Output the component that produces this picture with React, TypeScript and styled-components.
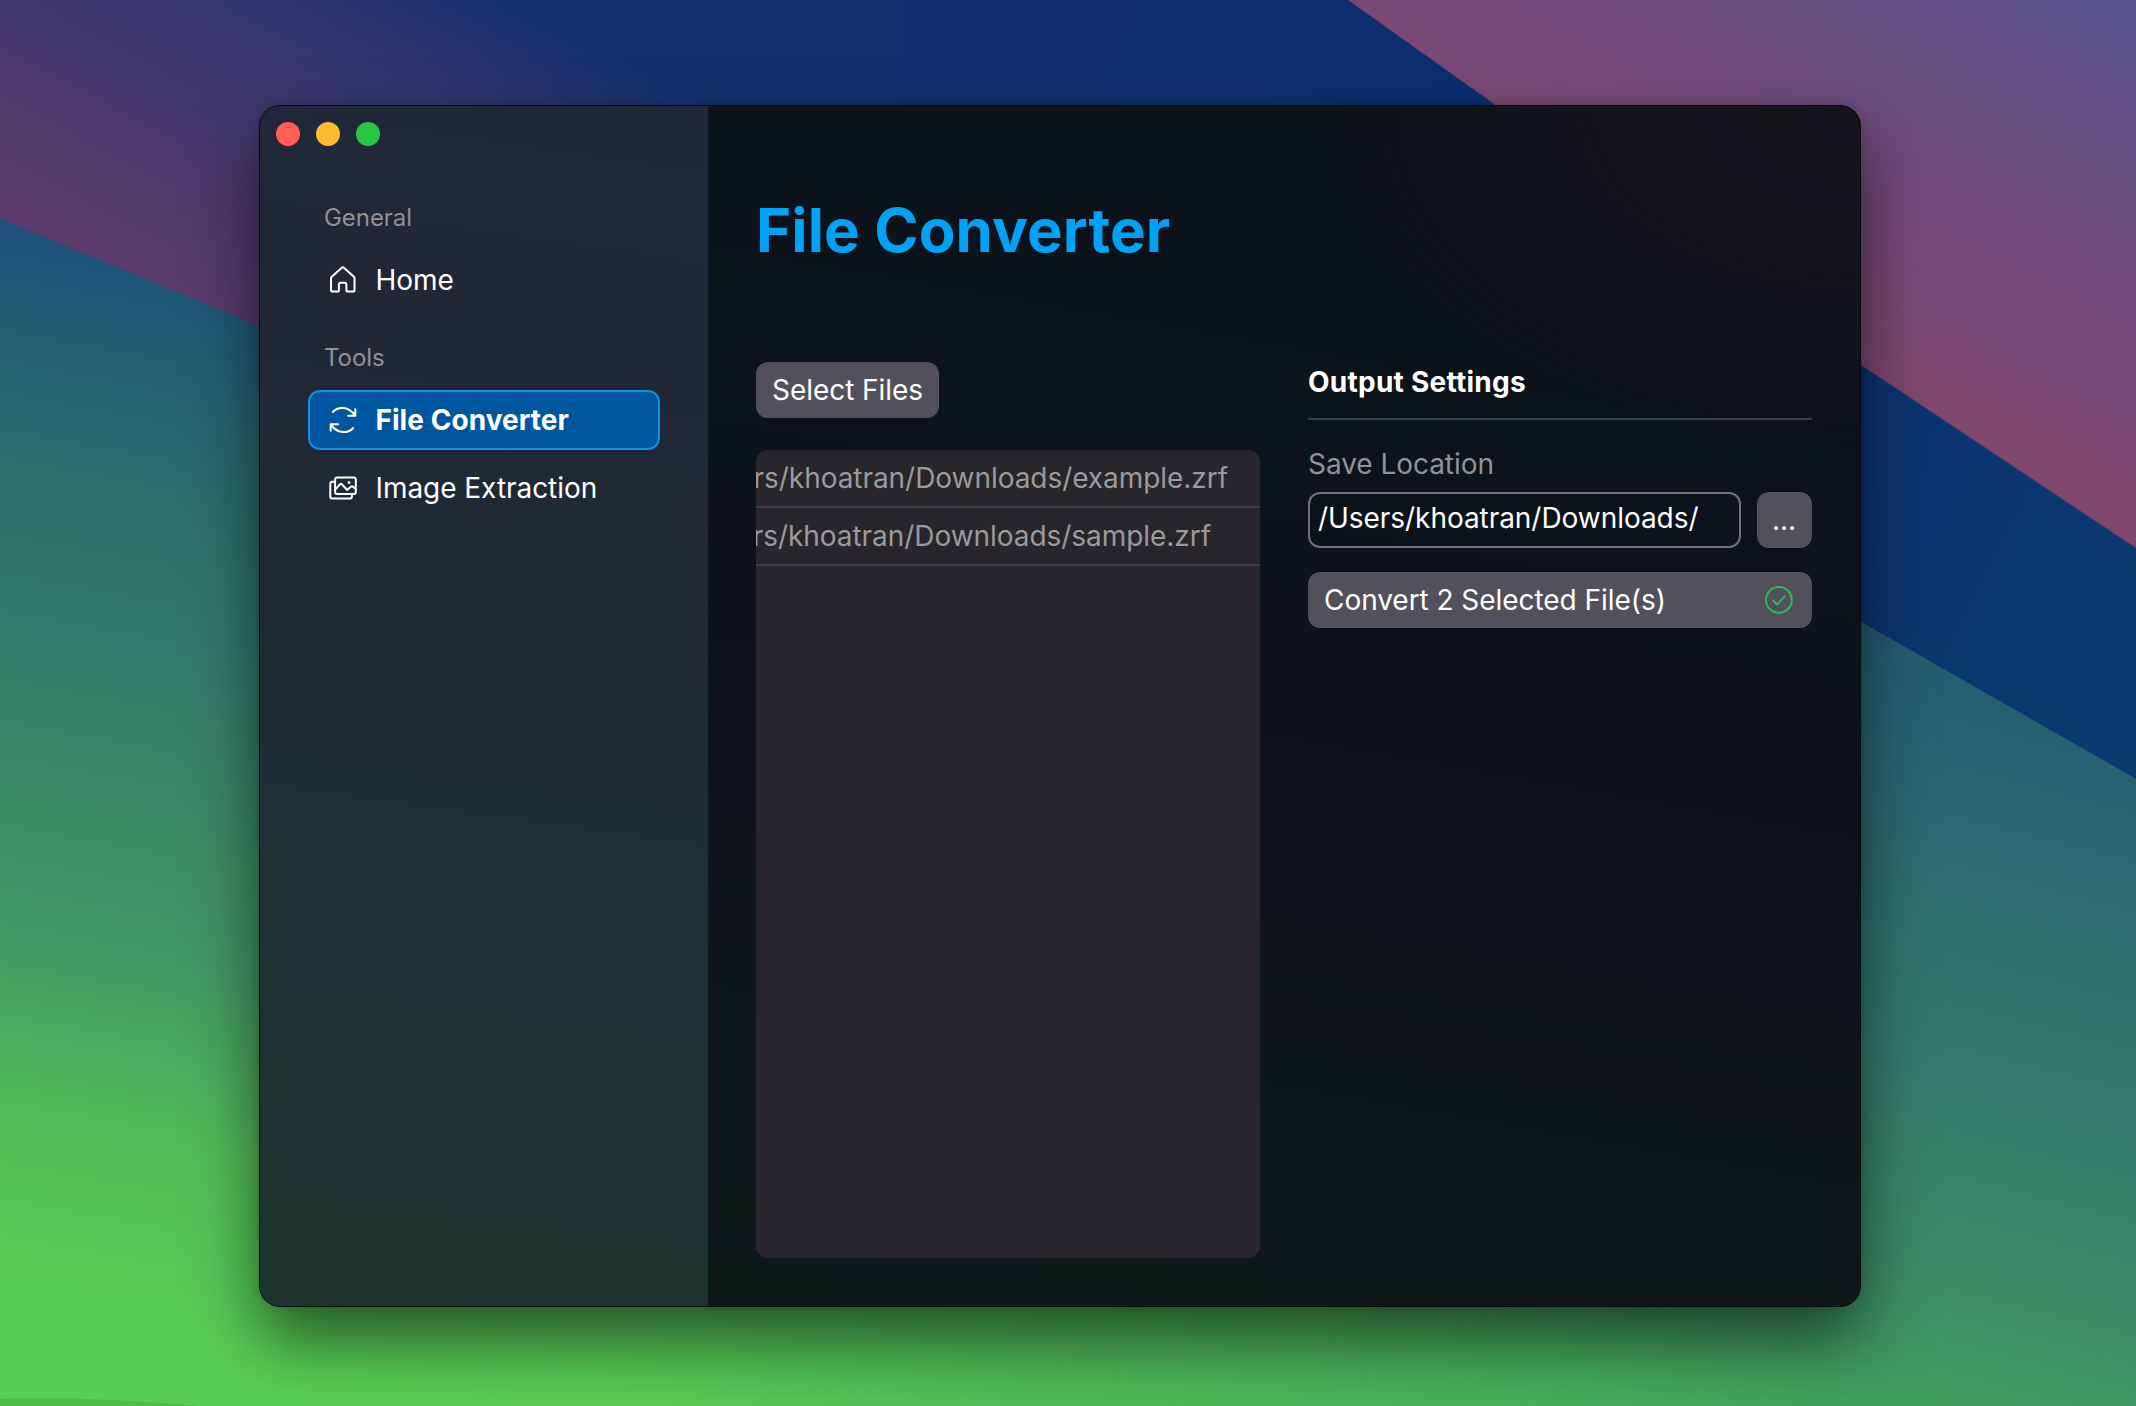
import React from "react";
import styled, { createGlobalStyle } from "styled-components";

const Global = createGlobalStyle`
  *, *::before, *::after { box-sizing: border-box; }
  body { margin: 0; background: #2f7a6a; }
  button, input { font: inherit; color: inherit; border: 0; margin: 0; letter-spacing: inherit; }
`;

const Desktop = styled.main`
  position: relative;
  width: 2136px;
  height: 1406px;
  overflow: hidden;
  padding: 105px 0 0 259px;
  font-family: Inter, "Noto Sans", sans-serif;
  font-size: 28px;
  font-weight: 400;
  line-height: 40px;
  letter-spacing: -0.05px;
  color: #fff;
`;

const Wallpaper = styled.svg`
  position: absolute;
  inset: 0;
  width: 100%;
  height: 100%;
`;

const AppWindow = styled.div`
  position: relative;
  display: flex;
  width: 1602px;
  height: 1202px;
  border: 1px solid rgba(4, 10, 16, 0.85);
  border-radius: 21px;
  overflow: hidden;
  background:
    radial-gradient(520px 330px at 100% 0%, #16141b 0%, rgba(22, 20, 27, 0.9) 40%, rgba(22, 20, 27, 0) 100%),
    linear-gradient(190deg, #0c121a 0%, #0c131b 30%, #0e121a 52%, #0f1618 70%, #0f1717 88%, #0d1a18 100%);
  box-shadow: 0 34px 68px rgba(0, 0, 0, 0.56), 0 0 10px rgba(0, 0, 0, 0.12);
`;

const Sidebar = styled.aside`
  width: 448px;
  flex: none;
  display: flex;
  flex-direction: column;
  background: linear-gradient(188deg, #1f2838 0%, #222738 14%, #222738 24%, #1e2a34 42%, #1d2f34 66%, #1e332f 84%, #1e352f 100%);
`;

const TrafficLights = styled.div`
  display: flex;
  gap: 16px;
  padding: 16px;
`;

const Light = styled.span<{ $color: string }>`
  width: 24px;
  height: 24px;
  border-radius: 50%;
  background: ${(p) => p.$color};
`;

const Nav = styled.nav`
  display: flex;
  flex-direction: column;
  gap: 8px;
  padding: 24px 48px 0;
`;

const NavGroup = styled.div`
  display: flex;
  flex-direction: column;
`;

const NavHeading = styled.h2`
  margin: 0;
  height: 64px;
  padding: 16px 16px 0;
  font-size: 24px;
  font-weight: inherit;
  line-height: 32px;
  color: #919298;
`;

const NavItem = styled.a<{ $active?: boolean }>`
  display: flex;
  align-items: center;
  gap: 17.5px;
  height: 60px;
  margin-bottom: 8px;
  padding: 0 16px 0 18px;
  border: 2px solid ${(p) => (p.$active ? "#0f95e3" : "transparent")};
  border-radius: 12px;
  background: ${(p) => (p.$active ? "#0057a0" : "transparent")};
  font-weight: ${(p) => (p.$active ? 700 : "inherit")};
  letter-spacing: ${(p) => (p.$active ? "0.05px" : "inherit")};
`;

const Icon = styled.svg`
  width: 30px;
  height: 30px;
  flex: none;
  fill: none;
  stroke: currentColor;
  stroke-width: 2;
  stroke-linecap: round;
  stroke-linejoin: round;
`;

const Content = styled.section`
  flex: 1;
  display: flex;
  flex-direction: column;
  padding: 84px 48px 48px;
`;

const Title = styled.h1`
  margin: 0 0 92px;
  font-size: 60px;
  line-height: 80px;
  font-weight: 700;
  letter-spacing: 0.1px;
  color: #00a2f5;
`;

const Columns = styled.div`
  flex: 1;
  display: grid;
  grid-template-columns: 504px 504px;
  gap: 48px;
`;

const Column = styled.div`
  display: flex;
  flex-direction: column;
  align-items: flex-start;
`;

const Button = styled.button`
  display: flex;
  align-items: center;
  justify-content: space-between;
  height: 56px;
  padding: 0 16px;
  border-radius: 12px;
  background: #52515b;
`;

const FileList = styled.ul`
  flex: 1;
  width: 100%;
  margin: 32px 0 0;
  padding: 0;
  border-radius: 12px;
  background: #28262b;
  overflow: hidden;
  list-style: none;
`;

const FileRow = styled.li<{ $inset: number }>`
  display: flex;
  justify-content: flex-end;
  height: 58px;
  padding: 8px ${(p) => p.$inset}px 0 0;
  border-bottom: 2px solid #404046;
  white-space: nowrap;
  color: #9b9a9c;
`;

const SettingsTitle = styled.h2`
  width: 100%;
  height: 58px;
  margin: 0 0 24px;
  border-bottom: 2px solid #3b3e44;
  font-size: 28px;
  line-height: 40px;
  font-weight: 700;
  letter-spacing: 0.25px;
`;

const Label = styled.label`
  margin-bottom: 8px;
  color: #919396;
`;

const PathRow = styled.div`
  display: flex;
  gap: 16px;
  width: 100%;
  margin-bottom: 24px;
`;

const PathInput = styled.input`
  flex: 1;
  min-width: 0;
  height: 56px;
  padding: 0 8px 4px;
  border: 2px solid #72747a;
  border-radius: 12px;
  background: transparent;
  outline: 0;
`;

const BrowseButton = styled(Button)`
  width: 55px;
  padding: 0 16px 0 15px;
  justify-content: center;
`;

const ConvertButton = styled(Button)`
  width: 100%;
  padding-right: 18px;
`;

const DoneIcon = styled(Icon)`
  color: #2fb95f;
`;

const files = [
  { path: "/Users/khoatran/Downloads/example.zrf", inset: 32 },
  { path: "/Users/khoatran/Downloads/sample.zrf", inset: 49 },
];

function WallpaperArt() {
  return (
    <Wallpaper viewBox="0 0 2136 1406" preserveAspectRatio="none">
      <defs>
        <linearGradient id="blue" gradientUnits="userSpaceOnUse" x1="700" y1="0" x2="2100" y2="700">
          <stop offset="0" stopColor="#14306f" />
          <stop offset="0.5" stopColor="#0a2e70" />
          <stop offset="1" stopColor="#0c3970" />
        </linearGradient>
        <linearGradient id="rose" gradientUnits="userSpaceOnUse" x1="2136" y1="548" x2="2361" y2="116">
          <stop offset="0" stopColor="#83476d" />
          <stop offset="0.3" stopColor="#774976" />
          <stop offset="0.7" stopColor="#644d80" />
          <stop offset="1" stopColor="#54528c" />
        </linearGradient>
        <linearGradient id="plum" gradientUnits="userSpaceOnUse" x1="130" y1="272" x2="330" y2="-100">
          <stop offset="0" stopColor="#5b3b6b" />
          <stop offset="0.42" stopColor="#43396e" />
          <stop offset="0.7" stopColor="#33366f" />
          <stop offset="0.85" stopColor="#25336f" />
          <stop offset="1" stopColor="#14306f" />
        </linearGradient>
        <linearGradient id="meadow" gradientUnits="userSpaceOnUse" x1="0" y1="220" x2="-200" y2="1320">
          <stop offset="0" stopColor="#1d507c" />
          <stop offset="0.14" stopColor="#27656f" />
          <stop offset="0.4" stopColor="#367f69" />
          <stop offset="0.62" stopColor="#419765" />
          <stop offset="0.79" stopColor="#52bd58" />
          <stop offset="0.96" stopColor="#58cf54" />
        </linearGradient>
        <linearGradient id="meadowRight" gradientUnits="userSpaceOnUse" x1="2000" y1="660" x2="1800" y2="1440">
          <stop offset="0" stopColor="#255c72" />
          <stop offset="0.35" stopColor="#30706f" />
          <stop offset="0.75" stopColor="#3d8a68" />
          <stop offset="1" stopColor="#42a85a" />
        </linearGradient>
        <linearGradient id="fade" x1="0" x2="1" y1="0" y2="0">
          <stop offset="0" stopColor="#fff" stopOpacity="0" />
          <stop offset="1" stopColor="#fff" stopOpacity="1" />
        </linearGradient>
        <mask id="rightMask">
          <rect x="700" y="0" width="1180" height="1406" fill="url(#fade)" />
          <rect x="1880" y="0" width="256" height="1406" fill="#fff" />
        </mask>
      </defs>
      <rect width="2136" height="1406" fill="url(#blue)" />
      <path d="M0 0H900V500H720L259 326L0 219Z" fill="url(#plum)" />
      <path d="M1348 0H2136V548L1861 365Z" fill="url(#rose)" />
      <path d="M0 219L259 326L1100 500L1861 622L2136 779V1406H0Z" fill="url(#meadow)" />
      <path d="M700 400L1861 622L2136 779V1406H700Z" fill="url(#meadowRight)" mask="url(#rightMask)" />
      <path d="M0 1399Q90 1396 200 1406H0Z" fill="#50bd4a" />
    </Wallpaper>
  );
}

function HomeIcon() {
  return (
    <Icon viewBox="0 0 30 30">
      <path d="M4.6 26.6H10a.9.9 0 0 0 .9-.9v-6.1a1.8 1.8 0 0 1 1.8-1.8h3.9a1.8 1.8 0 0 1 1.8 1.8v6.1a.9.9 0 0 0 .9.9h5.6a1.6 1.6 0 0 0 1.6-1.6V13.3a2 2 0 0 0-.65-1.5L15.9 2.7a1.5 1.5 0 0 0-2.1 0L3.7 11.8a2 2 0 0 0-.65 1.5V25a1.6 1.6 0 0 0 1.55 1.6Z" />
    </Icon>
  );
}

function ConvertIcon() {
  return (
    <Icon viewBox="0 0 30 30">
      <path d="M4.9 7C9 2 20 0 27 10.4M27.3 4.2v6.5H20" />
      <path d="M25.1 23C21 28 10 30 3 19.6M2.7 25.8v-6.5H10" />
    </Icon>
  );
}

function ImagesIcon() {
  return (
    <Icon viewBox="0 0 30 30">
      <rect x="7.1" y="4.6" width="20.7" height="16.4" rx="2" />
      <path d="M7 8.8H4.3a2 2 0 0 0-2 2v12.6a2 2 0 0 0 2 2h17.6a2 2 0 0 0 2-2V21.2" />
      <path d="M7.3 16.6l4.6-5.3a1.3 1.3 0 0 1 2 0L19.2 17l3.9-3.4a1.3 1.3 0 0 1 1.7 0l3 2.4" />
      <circle cx="21" cy="9.4" r="1.5" fill="currentColor" stroke="none" />
    </Icon>
  );
}

export default function App() {
  return (
    <Desktop>
      <Global />
      <WallpaperArt />
      <AppWindow>
        <Sidebar>
          <TrafficLights>
            <Light $color="#ff5f57" />
            <Light $color="#febc2e" />
            <Light $color="#28c840" />
          </TrafficLights>
          <Nav>
            <NavGroup>
              <NavHeading>General</NavHeading>
              <NavItem>
                <HomeIcon />
                Home
              </NavItem>
            </NavGroup>
            <NavGroup>
              <NavHeading>Tools</NavHeading>
              <NavItem $active>
                <ConvertIcon />
                File Converter
              </NavItem>
              <NavItem>
                <ImagesIcon />
                Image Extraction
              </NavItem>
            </NavGroup>
          </Nav>
        </Sidebar>
        <Content>
          <Title>File Converter</Title>
          <Columns>
            <Column>
              <Button>Select Files</Button>
              <FileList>
                {files.map((f) => (
                  <FileRow key={f.path} $inset={f.inset}>{f.path}</FileRow>
                ))}
              </FileList>
            </Column>
            <Column>
              <SettingsTitle>Output Settings</SettingsTitle>
              <Label>Save Location</Label>
              <PathRow>
                <PathInput defaultValue="/Users/khoatran/Downloads/" />
                <BrowseButton>...</BrowseButton>
              </PathRow>
              <ConvertButton>
                Convert 2 Selected File(s)
                <DoneIcon viewBox="0 0 30 30">
                  <circle cx="14.9" cy="14.9" r="12.9" />
                  <path d="M9.2 15.6l4 3.9 7.4-8.2" />
                </DoneIcon>
              </ConvertButton>
            </Column>
          </Columns>
        </Content>
      </AppWindow>
    </Desktop>
  );
}
